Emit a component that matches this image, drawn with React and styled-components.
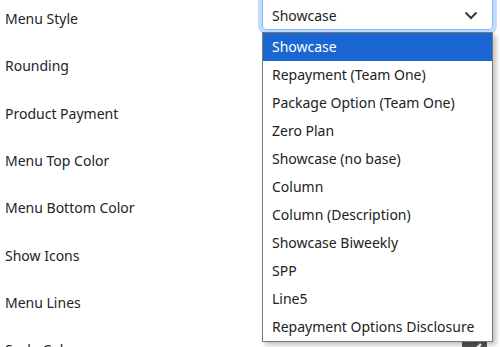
import styled, { createGlobalStyle } from "styled-components";

const OPTIONS = [
  "Showcase",
  "Repayment (Team One)",
  "Package Option (Team One)",
  "Zero Plan",
  "Showcase (no base)",
  "Column",
  "Column (Description)",
  "Showcase Biweekly",
  "SPP",
  "Line5",
  "Repayment Options Disclosure",
];

const ROWS = [
  "Menu Style",
  "Rounding",
  "Product Payment",
  "Menu Top Color",
  "Menu Bottom Color",
  "Show Icons",
  "Menu Lines",
  "Scale Color",
];

const GlobalStyle = createGlobalStyle`
  html, body {
    margin: 0;
    padding: 0;
    background: #fff;
    overflow: hidden;
  }
  body {
    font-family: "Segoe UI", "Noto Sans", sans-serif;
    color: #212529;
  }
`;

const Page = styled.div`
  position: relative;
  width: 500px;
  height: 347px;
  overflow: hidden;
`;

const Form = styled.div`
  margin-top: -8px;
  display: grid;
  grid-auto-rows: 47.33px;
`;

const Row = styled.div`
  display: grid;
  grid-template-columns: 262px 231px;
  align-items: start;
`;

const Label = styled.div`
  padding: 16px 0 0 5px;
  font-size: 14px;
  line-height: 22px;
`;

const Select = styled.div`
  height: 38px;
  box-sizing: border-box;
  border: 1px solid #86b7fe;
  border-radius: 4px;
  box-shadow: 0 0 0 4px rgba(13, 110, 253, 0.25);
  display: flex;
  align-items: center;
  justify-content: space-between;
  padding: 8px 14px 0 9px;
  font-size: 14px;
  color: #212529;
`;

const Check = styled.div`
  justify-self: end;
  margin: 12px 6px 0 0;
  width: 25px;
  height: 25px;
  border-radius: 3px;
  background: #555;
  display: flex;
  align-items: center;
  justify-content: center;
`;

const Menu = styled.ul`
  position: absolute;
  left: 262px;
  top: 32px;
  width: 231px;
  box-sizing: border-box;
  margin: 0;
  padding: 0;
  list-style: none;
  background: #fff;
  border: 1px solid #7a7a7a;
  box-shadow: 3px 3px 5px rgba(0, 0, 0, 0.25);
`;

const Option = styled.li`
  height: 28px;
  line-height: 28px;
  padding-left: 9px;
  font-size: 14px;
  white-space: nowrap;
  color: ${(p) => (p.$active ? "#fff" : "#222")};
  background: ${(p) => (p.$active ? "#1a66d2" : "transparent")};
`;

function Chevron() {
  return (
    <svg width="14" height="9" viewBox="0 0 14 9" fill="none">
      <path d="M1.5 1.5 7 7l5.5-5.5" stroke="#343a40" strokeWidth="2" />
    </svg>
  );
}

export default function App() {
  return (
    <Page>
      <GlobalStyle />
      <Form>
        {ROWS.map((label, i) => (
          <Row key={label}>
            <Label>{label}</Label>
            {i === 0 && (
              <Select>
                <span>Showcase</span>
                <Chevron />
              </Select>
            )}
            {i === ROWS.length - 1 && (
              <Check>
                <svg width="16" height="12" viewBox="0 0 16 12" fill="none">
                  <path d="M2 6l4 4 8-8" stroke="#fff" strokeWidth="2.5" />
                </svg>
              </Check>
            )}
          </Row>
        ))}
      </Form>
      <Menu>
        {OPTIONS.map((o, i) => (
          <Option key={o} $active={i === 0}>
            {o}
          </Option>
        ))}
      </Menu>
    </Page>
  );
}
